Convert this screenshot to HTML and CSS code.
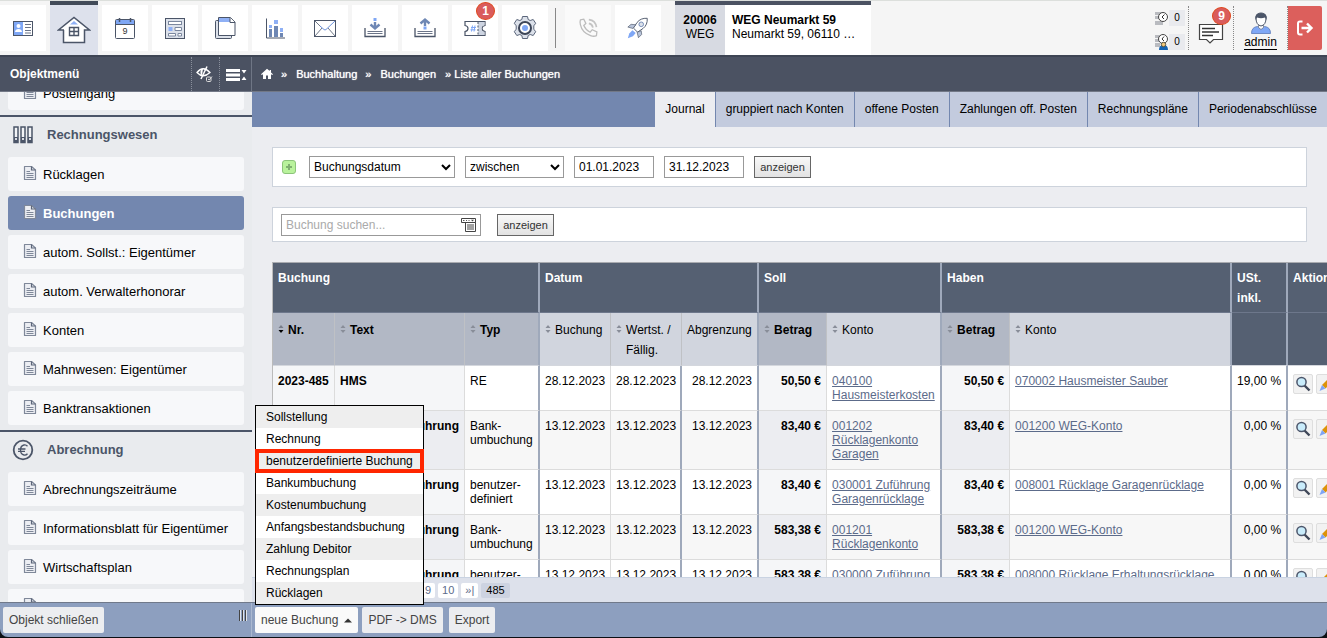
FILE: index.html
```html
<!DOCTYPE html>
<html lang="de">
<head>
<meta charset="utf-8">
<title>Liste aller Buchungen</title>
<link rel="stylesheet" href="styles.css">
</head>
<body>
<svg class="defs" aria-hidden="true">
  <symbol id="doc" viewBox="0 0 14 16">
    <path d="M1.500 1.500H8.500L12.500 5V14.500H1.500Z" fill="#eceef3" stroke="#7f8899" stroke-width="1.200" stroke-linejoin="round"/>
    <path d="M8.500 1.500V5H12.500" fill="none" stroke="#5c667a" stroke-width="1.200"/>
    <path d="M3.500 6.500H7M3.500 8.500H10.500M3.500 10.500H10.500M3.500 12.500H10.500" stroke="#7f8899" stroke-width="1"/>
  </symbol>
  <symbol id="sort" viewBox="0 0 6 10"><path d="M0.500 4L3 1L5.500 4Z" fill="#888d98"/><path d="M0.500 6L3 9L5.500 6Z" fill="#888d98"/></symbol>
  <symbol id="sort-down" viewBox="0 0 6 10"><path d="M0.500 4L3 1L5.500 4Z" fill="#777c88"/><path d="M0.500 6L3 9L5.500 6Z" fill="#000"/></symbol>
  <symbol id="lens" viewBox="0 0 18 18">
    <path d="M10.500 10.500L15.500 15.500" stroke="#3f4758" stroke-width="2.400"/>
    <circle cx="7.500" cy="7" r="4.600" fill="#c9ecfb" stroke="#4c566b" stroke-width="1.500"/>
  </symbol>
  <symbol id="pencil" viewBox="0 0 18 18">
    <path d="M5 10L12.500 2.500L16 6L8.500 13.500Z" fill="#dd9208"/>
    <path d="M5 10L8.500 13.500L2.500 16Z" fill="#7fa5f5"/>
  </symbol>
</svg>

<header class="topbar">
  <nav class="tiles" aria-label="Hauptnavigation">
    <button class="tile" aria-label="Kontakte"><svg width="24" height="24" viewBox="0 0 24 24"><rect x="2.500" y="5.500" width="19" height="14" fill="#fff" stroke="#4b5568"/><rect x="3" y="6" width="9" height="13" fill="#7fa7f5"/><circle cx="7.500" cy="10" r="2" fill="#fff"/><path d="M4 16c0-4 7-4 7 0z" fill="#fff"/><path d="M14 8.500h6M14 11.500h6M14 14.500h6M14 17h6" stroke="#6b7488"/></svg></button>
    <button class="tile active" aria-label="Objekte"><svg width="34" height="30" viewBox="0 0 34 30"><path d="M7 15H1.500L17 2.500L32.500 15H27.500V27.500H6.500V15Z" fill="#fff" stroke="#4b5568" stroke-width="1.500"/><path d="M13 9.500L17 6L21 9.500Z" fill="#8fb0f5"/><path d="M12.500 12.500h9v8h-9zM17 12.500v8M12.500 16.500h9" fill="none" stroke="#4b5568" stroke-width="1.400"/></svg></button>
    <button class="tile" aria-label="Kalender"><svg width="24" height="24" viewBox="0 0 24 24"><rect x="2.500" y="3.500" width="19" height="19" rx="1" fill="#fff" stroke="#4b5568"/><rect x="3" y="4" width="18" height="4" fill="#7fa7f5"/><path d="M3 8.500h18" stroke="#4b5568"/><path d="M6.500 2v4M17.500 2v4" stroke="#4b5568" stroke-width="1.500"/><text x="12" y="18" text-anchor="middle" class="cal-day">9</text></svg></button>
    <button class="tile" aria-label="Berichte"><svg width="24" height="24" viewBox="0 0 24 24"><rect x="2.500" y="2.500" width="19" height="20" fill="#dce1ea" stroke="#4b5568"/><rect x="5.500" y="5.500" width="13" height="3" fill="#fff" stroke="#7b879e"/><rect x="5.500" y="11" width="4" height="4" fill="#8fb0f5"/><path d="M12 11.500h6.500v3H12zM5.500 17.500h7v2.500h-7zM15 17.500h3.500v2.500H15z" fill="#fff" stroke="#7b879e"/></svg></button>
    <button class="tile" aria-label="Dokumente"><svg width="24" height="24" viewBox="0 0 24 24"><rect x="2.500" y="4.500" width="16" height="18" rx="1" fill="#dce1ea" stroke="#4b5568"/><path d="M5.500 1.500h12l4.500 4.500v13.500H5.500z" fill="#fff" stroke="#4b5568"/><path d="M6 2h10.500l1.500 4H6z" fill="#8fb0f5"/><path d="M17 1.500V6.500h5" fill="#fff" stroke="#4b5568"/></svg></button>
    <button class="tile" aria-label="Auswertungen"><svg width="24" height="24" viewBox="0 0 24 24"><path d="M3.500 2.500v19.500H22" fill="none" stroke="#4b5568"/><path d="M6 13h3v8H6zM11 10h4v11h-4zM17 17h3v4h-3z" fill="#6e87b4"/><path d="M6 9h3v3H6zM11 4h4v4h-4zM17 12h3v4h-3z" fill="#8fb0f5"/></svg></button>
    <button class="tile" aria-label="Nachrichten"><svg width="24" height="24" viewBox="0 0 24 24"><rect x="1.500" y="4.500" width="21" height="16" fill="#fff" stroke="#4b5568"/><path d="M2 20l7-8M22 20l-7-8M2 5l6 6" stroke="#4b5568" stroke-width=".8"/><path d="M22 5L13 13.500Q12 14.500 11 13.500L7 10" fill="none" stroke="#6b91dd"/></svg></button>
    <button class="tile" aria-label="Eingang"><svg width="24" height="24" viewBox="0 0 24 24"><path d="M2 12v8.500h20V12" fill="none" stroke="#4b5568" stroke-width="1.300"/><path d="M4.500 15.500h15M4.500 17.500h15" stroke="#6b7488"/><path d="M12 6v6M7.500 8.500L12 12.500l4.500-4" fill="none" stroke="#6e87b4" stroke-width="2.400"/><path d="M10.500 2h3v3h-3z" fill="#7fa7f5"/></svg></button>
    <button class="tile" aria-label="Ausgang"><svg width="24" height="24" viewBox="0 0 24 24"><path d="M2 12v8.500h20V12" fill="none" stroke="#4b5568" stroke-width="1.300"/><path d="M4.500 15.500h15M4.500 17.500h15" stroke="#6b7488"/><path d="M12 4v6M7.500 7.500L12 3.500l4.500 4" fill="none" stroke="#6e87b4" stroke-width="2.400"/><path d="M10.500 10.500h3v3h-3z" fill="#7fa7f5"/></svg></button>
    <button class="tile" aria-label="Tickets"><svg width="24" height="24" viewBox="0 0 24 24"><path d="M2 5.500h20v4q-3 .5-3 3t3 3v4H2v-4q3-.5 3-3t-3-3z" fill="#fff" stroke="#4b5568" stroke-width="1.200"/><path d="M15 6h6.500v3.200q-3 .5-3 3.300t3 3.300V19H15z" fill="#cdd4e1"/><path d="M15 6v13" stroke="#4b5568" stroke-dasharray="2 1.500"/><path d="M9.500 9.500l-1 6M12 9.500l-1 6M8 11.500h5M7.500 13.800h5" stroke="#7fa7f5"/></svg><span class="badge tile-badge">1</span></button>
    <button class="tile" aria-label="Einstellungen"><svg width="26" height="26" viewBox="0 0 26 26"><path d="M10.500 1.500h5l.7 3 2 1 3-1 2.500 3.800-1.900 2.500v3.400l1.900 2.500-2.500 3.800-3-1-2 1-.7 3h-5l-.7-3-2-1-3 1-2.500-3.800 1.900-2.500v-3.400L2.300 8.300l2.500-3.800 3 1 2-1z" fill="#dce1ea" stroke="#5a657a"/><circle cx="13" cy="13" r="6" fill="#fff" stroke="#3d4658" stroke-width="2"/><circle cx="13" cy="13" r="3" fill="#7fa7f5"/></svg></button>
    <span class="tile-rule"></span>
    <button class="tile faint" aria-label="Telefon"><svg width="22" height="22" viewBox="0 0 26 26"><path d="M4 3.500l4-1 2.500 5-2.500 2.500q2.500 5.500 7.500 8l2.500-3 5.500 2.500-.5 4.500q-3 1.500-7 0Q6 18.500 4 9q-.8-3.500 0-5.500z" fill="#fafafa" stroke="#bcbcbc" stroke-width="1.500"/><path d="M14 3q8 1 9 9M14 7.500q4 .8 4.800 5" fill="none" stroke="#c4c4c4" stroke-width="2"/></svg></button>
    <button class="tile" aria-label="Schnellstart"><svg width="24" height="24" viewBox="0 0 26 26"><path d="M23 2.500q-7-.5-11 4.500l-4 6 4.500 4.500 6-4q5-4 4.500-11z" fill="#fff" stroke="#4b5568"/><circle cx="16.500" cy="9" r="2.500" fill="#dce1ea" stroke="#6e87b4"/><path d="M10.500 9.500L5.500 9 2 12l5.500 1.500zM16.500 16l.5 4-3.500 3.500-1.500-6z" fill="#b9c4da" stroke="#4b5568" stroke-width=".7"/><path d="M7 15.500l3.500 3-3 3.500L2 24l1.500-5z" fill="#7fa7f5"/></svg></button>
  </nav>
  <div class="object">
    <div class="object-id"><strong>20006</strong><span>WEG</span></div>
    <div class="object-name"><strong>WEG Neumarkt 59</strong><span>Neumarkt 59, 06110 …</span></div>
  </div>
  <div class="user">
    <div class="counters">
      <div class="counter"><svg width="14" height="16" viewBox="0 0 14 16"><path d="M0 2h7v3H0zM0 6h6v3H0zM0 11h8v4H0z" fill="#b9bbc0"/><circle cx="8" cy="7" r="4.500" fill="#fff" stroke="#444"/><path d="M9.500 4.500L7 7l2 2" fill="none" stroke="#333"/></svg><span>0</span></div>
      <div class="counter"><svg width="14" height="16" viewBox="0 0 14 16"><path d="M0 1h7v3H0zM0 5h6v3H0zM0 9h5v4H0z" fill="#b9bbc0"/><circle cx="8" cy="5" r="4.500" fill="#fff" stroke="#444"/><path d="M9 2.500L7 5l2 2" fill="none" stroke="#333"/><path d="M4 16q0-5 4.500-5t4.500 5z" fill="#1464b4"/><circle cx="8.500" cy="10.500" r="2.200" fill="#f5c97a" stroke="#554"/></svg><span>0</span></div>
    </div>
    <button class="messages" aria-label="Mitteilungen"><svg width="26" height="24" viewBox="0 0 26 24"><path d="M1.500 3.500h23v15h-9L12 22l-3.500-3.500h-7z" fill="#fff" stroke="#444" stroke-width="1.200"/><path d="M4 7.500h13M4 11h17M4 14.500h11" stroke="#333" stroke-width="1.300"/></svg><span class="badge message-badge">9</span></button>
    <a class="admin" href="#"><svg width="22" height="22" viewBox="0 0 22 22"><path d="M1.500 21.500q0-6.500 6-7l3.500 2 3.500-2q6 .5 6 7z" fill="#7fa7f5" stroke="#5b78b8" stroke-width=".8"/><path d="M8.500 12v3.500l2.500 2 2.500-2V12" fill="#fff" stroke="#6b7387" stroke-width=".8"/><path d="M6 6q0-5 5-5t5 5q0 7-5 8Q6 13 6 6z" fill="#fff" stroke="#4b5568"/><path d="M5.500 8Q4 1 11 1t5.500 7L15 5.500Q11 7 7 5.500z" fill="#4b5568"/></svg><span>admin</span></a>
    <button class="logout" aria-label="Abmelden"><svg width="18" height="18" viewBox="0 0 18 18"><path d="M6.500 2.500H4Q2 2.500 2 4.500v9q0 2 2 2h2.500" fill="none" stroke="#fff" stroke-width="2"/><path d="M5.500 9h10M11 4.500L15.500 9 11 13.500" fill="none" stroke="#fff" stroke-width="2.400"/></svg></button>
  </div>
</header>

<div class="titlebar">
  <div class="menu-title">
    <h2>Objektmenü</h2>
    <button aria-label="Ausblenden"><svg width="18" height="18" viewBox="0 0 18 18"><path d="M1 7.500Q7 0 14 7.500Q7 14 1 7.500z" fill="none" stroke="#fff" stroke-width="1.300"/><path d="M7 3.500a4 4 0 0 0-1 7z" fill="#fff"/><path d="M11 1.500L5 14" stroke="#fff" stroke-width="1.500"/><rect x="10.500" y="12" width="4.500" height="4.500" rx="1" fill="#4b5262" stroke="#ddd"/><path d="M12 14l1.200 1 2.800-3.500" fill="none" stroke="#ddd"/></svg></button>
    <button aria-label="Einklappen"><svg width="22" height="14" viewBox="0 0 22 14"><path d="M0 2h14v3H0zM0 6.500h14v3H0zM0 11h14v3H0zM15.500 3h5L18 6.500zM15.500 13h5L18 9.500z" fill="#fff"/></svg></button>
  </div>
  <nav class="crumbs" aria-label="Pfad">
    <a href="#" aria-label="Start"><svg width="12" height="12" viewBox="0 0 12 12"><path d="M6 .8L0 6.300l.8.8L2 6.200V11h3V7.500h2V11h3V6.200l1.200.9.8-.8-2-1.900V2H8.700v1.100z" fill="#fff"/></svg></a>
    <span>»</span><a href="#">Buchhaltung</a><span>»</span><a href="#">Buchungen</a><span class="crumb-last">» Liste aller Buchungen</span>
  </nav>
</div>

<div class="middle">
  <aside class="sidebar">
    <div class="sidebar-scroll">
      <ul class="menu">
        <li><a href="#"><svg><use href="#doc"/></svg>Posteingang</a></li>
      </ul>
      <h3><svg width="22" height="18" viewBox="0 0 22 18"><path d="M2 1h4v15.500H2zM9 1h4v15.500H9zM16 1h4v15.500h-4z" fill="#f3f4f7" stroke="#4b5568" stroke-width="1.500"/><path d="M2 11h4v5H2zM9 11h4v5H9zM16 11h4v5h-4z" fill="#4b5568"/><path d="M3 12h2v2H3zM10 12h2v2h-2zM17 12h2v2h-2z" fill="#d8dbe2"/></svg>Rechnungswesen</h3>
      <ul class="menu">
        <li><a href="#"><svg><use href="#doc"/></svg>Rücklagen</a></li>
        <li><a href="#" class="current"><svg><use href="#doc"/></svg>Buchungen</a></li>
        <li><a href="#"><svg><use href="#doc"/></svg>autom. Sollst.: Eigentümer</a></li>
        <li><a href="#"><svg><use href="#doc"/></svg>autom. Verwalterhonorar</a></li>
        <li><a href="#"><svg><use href="#doc"/></svg>Konten</a></li>
        <li><a href="#"><svg><use href="#doc"/></svg>Mahnwesen: Eigentümer</a></li>
        <li><a href="#"><svg><use href="#doc"/></svg>Banktransaktionen</a></li>
      </ul>
      <h3><svg width="22" height="22" viewBox="0 0 22 22"><circle cx="11" cy="11" r="9.300" fill="none" stroke="#4b5568" stroke-width="1.800"/><path d="M15.500 7.200q-1.500-1.700-3.500-1.200-3.500.8-3.500 5t3.500 5q2 .5 3.500-1.200M6 10h7.500M6 12.300h7" fill="none" stroke="#4b5568" stroke-width="1.300"/></svg>Abrechnung</h3>
      <ul class="menu">
        <li><a href="#"><svg><use href="#doc"/></svg>Abrechnungszeiträume</a></li>
        <li><a href="#"><svg><use href="#doc"/></svg>Informationsblatt für Eigentümer</a></li>
        <li><a href="#"><svg><use href="#doc"/></svg>Wirtschaftsplan</a></li>
        <li><a href="#"><svg><use href="#doc"/></svg>Sonderumlage</a></li>
      </ul>
    </div>
  </aside>

  <main class="content">
    <nav class="tabs" aria-label="Ansichten">
      <a href="#" class="selected">Journal</a><a href="#">gruppiert nach Konten</a><a href="#">offene Posten</a><a href="#">Zahlungen off. Posten</a><a href="#">Rechnungspläne</a><a href="#">Periodenabschlüsse</a>
    </nav>
    <div class="scroll">
      <form class="panel filter">
        <button type="button" class="add" aria-label="Filter hinzufügen"><svg width="14" height="14" viewBox="0 0 14 14"><rect x=".5" y=".5" width="13" height="13" rx="2.500" fill="#b9f29c" stroke="#8cc47a"/><path d="M7 4v6M4 7h6" stroke="#7fb070" stroke-width="2"/></svg></button>
        <select class="field-date" aria-label="Feld"><option>Buchungsdatum</option></select>
        <select class="field-op" aria-label="Operator"><option>zwischen</option></select>
        <input type="text" value="01.01.2023" aria-label="Von">
        <input type="text" value="31.12.2023" aria-label="Bis">
        <button type="button" class="show">anzeigen</button>
      </form>
      <form class="panel search">
        <div class="search-box">
          <input type="text" placeholder="Buchung suchen..." aria-label="Buchung suchen">
          <svg width="16" height="16" viewBox="0 0 16 16"><path d="M.5 1.500h14v4H.5zM4.500 5.500h10v9h-10z" fill="#fff" stroke="#444"/><path d="M6 8h7M6 10h7M6 12h7" stroke="#444"/><path d="M2 3.500h1.500M5 3.500h1M7.500 3.500h1" stroke="#555"/><path d="M10 2.800h3L11.500 4.500z" fill="#444"/></svg>
        </div>
        <button type="button" class="show">anzeigen</button>
      </form>

      <table class="journal">
        <colgroup><col class="c-nr"><col class="c-text"><col class="c-typ"><col class="c-date"><col class="c-date"><col class="c-abgr"><col class="c-amount"><col class="c-konto"><col class="c-amount"><col class="c-konto2"><col class="c-ust"><col class="c-act"></colgroup>
        <thead>
          <tr class="groups"><th colspan="3" class="thick">Buchung</th><th colspan="3" class="thick">Datum</th><th colspan="2" class="thick">Soll</th><th colspan="2" class="thick">Haben</th><th class="thick">USt. inkl.</th><th>Aktionen</th></tr>
          <tr class="columns">
            <th class="key"><div><svg><use href="#sort-down"/></svg>Nr.</div></th>
            <th class="key"><div><svg><use href="#sort"/></svg>Text</div></th>
            <th class="key thick"><div><svg><use href="#sort"/></svg>Typ</div></th>
            <th><div><svg><use href="#sort"/></svg>Buchung</div></th>
            <th><div><svg><use href="#sort"/></svg>Wertst. / Fällig.</div></th>
            <th class="thick">Abgrenzung</th>
            <th class="key"><div><svg><use href="#sort"/></svg>Betrag</div></th>
            <th class="thick"><div><svg><use href="#sort"/></svg>Konto</div></th>
            <th class="key"><div><svg><use href="#sort"/></svg>Betrag</div></th>
            <th class="thick"><div><svg><use href="#sort"/></svg>Konto</div></th>
            <th class="dark thick"></th><th class="dark"></th>
          </tr>
        </thead>
        <tbody>
          <tr><td class="strong">2023-485</td><td class="strong">HMS</td><td class="thick">RE</td><td>28.12.2023</td><td class="thick">28.12.2023</td><td class="num thick">28.12.2023</td><td class="strong num">50,50 €</td><td class="thick"><a href="#">040100 Hausmeisterkosten</a></td><td class="strong num">50,50 €</td><td class="thick"><a href="#">070002 Hausmeister Sauber</a></td><td class="num thick">19,00 %</td><td class="actions"><div><button aria-label="Ansehen"><svg><use href="#lens"/></svg></button><button aria-label="Bearbeiten"><svg><use href="#pencil"/></svg></button></div></td></tr>
          <tr><td class="strong">2023-484</td><td class="strong num">Rücklagenzuführung</td><td class="thick">Bank-<br>umbuchung</td><td>13.12.2023</td><td class="thick">13.12.2023</td><td class="num thick">13.12.2023</td><td class="strong num">83,40 €</td><td class="thick"><a href="#">001202 Rücklagenkonto Garagen</a></td><td class="strong num">83,40 €</td><td class="thick"><a href="#">001200 WEG-Konto</a></td><td class="num thick">0,00 %</td><td class="actions"><div><button aria-label="Ansehen"><svg><use href="#lens"/></svg></button><button aria-label="Bearbeiten"><svg><use href="#pencil"/></svg></button></div></td></tr>
          <tr><td class="strong">2023-483</td><td class="strong num">Rücklagenzuführung</td><td class="thick">benutzer-<br>definiert</td><td>13.12.2023</td><td class="thick">13.12.2023</td><td class="num thick">13.12.2023</td><td class="strong num">83,40 €</td><td class="thick"><a href="#">030001 Zuführung Garagenrücklage</a></td><td class="strong num">83,40 €</td><td class="thick"><a href="#">008001 Rücklage Garagenrücklage</a></td><td class="num thick">0,00 %</td><td class="actions"><div><button aria-label="Ansehen"><svg><use href="#lens"/></svg></button><button aria-label="Bearbeiten"><svg><use href="#pencil"/></svg></button></div></td></tr>
          <tr><td class="strong">2023-482</td><td class="strong num">Rücklagenzuführung</td><td class="thick">Bank-<br>umbuchung</td><td>13.12.2023</td><td class="thick">13.12.2023</td><td class="num thick">13.12.2023</td><td class="strong num">583,38 €</td><td class="thick"><a href="#">001201 Rücklagenkonto</a></td><td class="strong num">583,38 €</td><td class="thick"><a href="#">001200 WEG-Konto</a></td><td class="num thick">0,00 %</td><td class="actions"><div><button aria-label="Ansehen"><svg><use href="#lens"/></svg></button><button aria-label="Bearbeiten"><svg><use href="#pencil"/></svg></button></div></td></tr>
          <tr><td class="strong">2023-481</td><td class="strong num">Rücklagenzuführung</td><td class="thick">benutzer-<br>definiert</td><td>13.12.2023</td><td class="thick">13.12.2023</td><td class="num thick">13.12.2023</td><td class="strong num">583,38 €</td><td class="thick"><a href="#">030000 Zuführung Rücklage</a></td><td class="strong num">583,38 €</td><td class="thick"><a href="#">008000 Rücklage Erhaltungsrücklage</a></td><td class="num thick">0,00 %</td><td class="actions"><div><button aria-label="Ansehen"><svg><use href="#lens"/></svg></button><button aria-label="Bearbeiten"><svg><use href="#pencil"/></svg></button></div></td></tr>
        </tbody>
      </table>
    </div>
    <nav class="pager" aria-label="Seiten">
      <a href="#">|«</a><a href="#">1</a><a href="#">2</a><a href="#">3</a><a href="#">4</a><a href="#">5</a><a href="#">6</a><a href="#">7</a><a href="#">8</a><a href="#">9</a><a href="#">10</a><a href="#">»|</a><span>485</span>
    </nav>
  </main>
</div>

<footer class="footer">
  <div class="footer-left"><button>Objekt schließen</button><span class="grip"></span></div>
  <div class="footer-main">
    <div class="dropdown">
      <button class="open">neue Buchung <svg width="8" height="5" viewBox="0 0 8 5"><path d="M0 4.500L4 .5L8 4.500Z" fill="#333"/></svg></button>
      <ul class="popup">
        <li><a href="#">Sollstellung</a></li>
        <li><a href="#">Rechnung</a></li>
        <li class="marked"><a href="#">benutzerdefinierte Buchung</a></li>
        <li><a href="#">Bankumbuchung</a></li>
        <li><a href="#">Kostenumbuchung</a></li>
        <li><a href="#">Anfangsbestandsbuchung</a></li>
        <li><a href="#">Zahlung Debitor</a></li>
        <li><a href="#">Rechnungsplan</a></li>
        <li><a href="#">Rücklagen</a></li>
      </ul>
    </div>
    <button>PDF -&gt; DMS</button>
    <button class="export">Export</button>
  </div>
</footer>
</body>
</html>
```

FILE: styles.css
```css
* { box-sizing: border-box; }
html, body { height: 100%; }
body {
  margin: 0;
  padding-bottom: 1px;
  display: flex;
  flex-direction: column;
  overflow: hidden;
  background: #0c0f14;
  color: #000;
  font: 12px/14px "Liberation Sans", Arial, sans-serif;
}
button, input, select { font: inherit; color: inherit; margin: 0; }
button { border: 0; padding: 0; background: none; }
a { color: inherit; text-decoration: none; }
ul { list-style: none; margin: 0; padding: 0; }
h2, h3 { margin: 0; }
svg { display: block; flex: none; }
.defs { position: absolute; width: 0; height: 0; }

/* Top bar */
.topbar {
  flex: none;
  display: flex;
  height: 55px;
  border-top: 1px solid #dcdfdc;
  background: #f5f5f5;
}
.tiles { display: flex; align-items: center; gap: 4px; }
.tile {
  position: relative;
  display: flex;
  align-items: center;
  justify-content: center;
  width: 46px;
  height: 46px;
  background: #fff;
}
.tile.active { width: 48px; height: 54px; border-top: 4px solid #414a58; background: #dde1ec; }
.tile.faint { background: #fafafa; }
.tile-rule { width: 1px; height: 40px; margin: 0 5px 0 3px; background: #888; }
.cal-day { font-size: 9px; fill: #333; }
.badge {
  position: absolute;
  width: 19px;
  height: 18px;
  border: 1px solid #e0481c;
  border-radius: 50%;
  background: #d95c5c;
  color: #fff;
  font-weight: bold;
  line-height: 16px;
  text-align: center;
}
.tile-badge { top: -3px; right: 3px; }
.object {
  display: flex;
  margin-left: 14px;
  width: 196px;
  border-top: 4px solid #4b5262;
  background: #fff;
}
.object-id, .object-name { display: flex; flex-direction: column; padding-top: 8px; }
.object-id { width: 50px; align-items: center; background: #d7dae2; }
.object-name { padding-left: 7px; }
.user { display: flex; align-items: center; margin-left: auto; padding-right: 5px; }
.user > * { height: 44px; }
.counters { display: flex; flex-direction: column; justify-content: space-between; padding: 4px 3px 0 0; }
.counter { display: flex; align-items: center; font-size: 10px; }
.counter span { width: 16px; height: 16px; background: #e9eaee; line-height: 16px; text-align: center; }
.counters, .messages, .admin { border-right: 1px dotted #888; }
.messages { position: relative; width: 45px; padding: 10px 0 0 9px; }
.message-badge { top: 1px; right: 2px; }
.admin { display: flex; flex-direction: column; align-items: center; width: 54px; padding-top: 6px; }
.admin span { padding-top: 2px; border-bottom: 1px solid #000; line-height: 13px; }
.logout { display: flex; align-items: center; justify-content: center; width: 34px; border-radius: 0 2px 2px 0; background: #dc5f5c; }

/* Title bar */
.titlebar {
  flex: none;
  display: flex;
  height: 37px;
  border-top: 2px solid #3e4554;
  border-bottom: 1px solid #727886;
  background: #4b5262;
  color: #fff;
}
.menu-title { display: flex; align-items: center; width: 252px; border-right: 1px solid #6f7685; }
.menu-title h2 { flex: 1; padding-left: 10px; font-size: 12px; }
.menu-title button { display: flex; align-items: center; height: 100%; border-left: 1px dotted #8a909c; padding-left: 4px; width: 28px; }
.menu-title button + button { width: 32px; padding-left: 6px; }
.crumbs { display: flex; align-items: center; gap: 9px; padding-left: 9px; font-size: 11px; text-shadow: 0 0 1px #fff; }
.crumbs a + span { margin-left: -1px; }
.crumbs .crumb-last { margin-left: 0; }

.middle { flex: 1; display: flex; min-height: 0; }

/* Sidebar */
.sidebar { flex: none; width: 252px; overflow: hidden; background: #e9ebee; }
.sidebar-scroll { margin-top: -16px; }
.sidebar h3 {
  display: flex;
  align-items: center;
  gap: 13px;
  height: 42px;
  margin-top: 5px;
  padding: 0 0 4px 12px;
  border-top: 2px solid #4b5568;
  color: #4b5568;
  font-size: 13px;
}
.menu { display: flex; flex-direction: column; gap: 5px; padding: 0 8px; }
.menu a { display: flex; align-items: center; gap: 6px; height: 34px; padding: 2px 0 0 15px; border-radius: 3px; background: #f7f8fa; font-size: 13px; }
.menu svg { width: 14px; height: 16px; margin-bottom: 4px; }
.menu a.current { background: #7387af; color: #fff; font-weight: bold; }

/* Content */
.content { flex: 1; min-width: 0; display: flex; flex-direction: column; background: #ecedf1; }
.tabs { flex: none; display: flex; justify-content: flex-end; height: 35px; background: #7387af; }
.tabs a { padding: 10px 10px 0; background: #c3cbde; white-space: nowrap; }
.tabs a + a { border-left: 1px solid #7387af; }
.tabs a.selected { background: #ecedf1; }
.scroll { flex: 1; min-height: 0; overflow: hidden; padding: 20px 20px 0; }
.panel { display: flex; border: 1px solid #cdd3dc; background: #fff; margin-bottom: 20px; }
.filter { align-items: center; gap: 10px; height: 40px; padding-left: 9px; }
.add { margin-right: 3px; }
.panel input, .panel select { height: 22px; border: 1px solid #999; border-radius: 0; background: #fff; padding: 0 4px; }
.panel select { padding: 0; }
.panel input { width: 80px; }
.field-date { width: 146px; }
.field-op { width: 99px; }
.show { width: 57px; height: 22px; border: 1px solid #666; background: linear-gradient(#f8f8f8, #e2e2e2); color: #333; font-size: 11px; }
.search { align-items: center; gap: 16px; height: 35px; padding-left: 8px; }
.search-box { position: relative; display: flex; }
.panel .search-box input { width: 200px; }
.search-box input::placeholder { color: #aaa; }
.search-box svg { position: absolute; right: 4px; top: 3px; }

/* Journal */
.journal { table-layout: fixed; width: 1136px; border-collapse: separate; border-spacing: 0; border-left: 1px solid #bbb; border-top: 1px solid #a9abb0; }
.c-nr { width: 62px; }
.c-text { width: 130px; }
.c-typ { width: 75px; }
.c-date { width: 71px; }
.c-abgr { width: 77px; }
.c-amount { width: 68px; }
.c-konto { width: 115px; }
.c-konto2 { width: 222px; }
.c-ust { width: 56px; }
.c-act { width: 120px; }
.journal th, .journal td { vertical-align: top; text-align: left; border-right: 1px solid #dcdcdc; }
.journal .thick { border-right: 2px solid #9fa9bb; }
.groups th { padding: 5px 5px 4px; border-bottom: 1px solid #6d778b; background: #556072; color: #fff; line-height: 20px; }
.columns th { height: 53px; padding: 7px 4px 5px 5px; border-bottom: 1px solid #d4d7dd; border-right-color: #bfc1c5; background: #d1d5de; font-weight: normal; line-height: 20px; }
.columns th.key { background: #b2b8c5; font-weight: bold; }
.columns th.dark { background: #556072; }
.columns div { display: flex; gap: 4px; }
.columns svg { width: 6px; height: 10px; margin-top: 4px; }
.journal td { padding: 8px 5px; border-bottom: 1px solid #dcdcdc; background: #fff; }
.journal td a { color: #5c6b8a; text-decoration: underline; }
.journal td.strong { background: #f5f6f8; font-weight: bold; }
.journal tr:nth-child(even) td { background: #f7f7f7; }
.journal tr:nth-child(even) td.strong { background: #ecedf1; }
.journal td.num { text-align: right; padding-left: 0; }
.journal td.actions { padding-bottom: 0; }
.actions div { display: flex; gap: 3px; }
.actions button { width: 20px; height: 20px; border: 1px solid #dedede; border-radius: 2px; background: #f2f2f2; }
.actions svg { width: 18px; height: 18px; }

/* Pager */
.pager { flex: none; display: flex; align-items: center; gap: 3px; height: 25px; padding-left: 12px; border-top: 1px solid #c9d3e2; background: #dde1eb; font-size: 11px; }
.pager a, .pager span { height: 15px; padding: 0 4px; border-radius: 2px; background: #fff; color: #5c6b8a; line-height: 15px; }
.pager span { padding: 0 5px; background: #cdd3e1; color: #000; }

/* Footer */
.footer { flex: none; display: flex; height: 35px; border-top: 1px solid #70798a; border-radius: 0 0 8px 8px; background: #8d9fbf; }
.footer-left { display: flex; justify-content: space-between; width: 252px; padding: 4px 4px 0 3px; border-right: 1px solid #aab8d0; }
.footer button { height: 26px; padding: 0 6px; border-radius: 2px; background: #ecedf0; color: #444; white-space: nowrap; }
.grip { width: 8px; height: 11px; margin-top: 3px; background: repeating-linear-gradient(90deg, #444 0 1px, #dfe4ec 1px 2px, #8d9fbf 2px 3px); }
.footer-main { display: flex; gap: 4px; padding: 4px 3px 0; }
.footer .open { display: flex; align-items: center; gap: 6px; background: #fafafa; }
.footer .export { margin-left: 2px; }
.dropdown { position: relative; height: 26px; }
.popup { position: absolute; left: 0; bottom: 28px; width: 169px; border: 1px solid #000; background: #fff; }
.popup a { display: block; padding: 0 10px; line-height: 22px; white-space: nowrap; }
.popup li:nth-child(odd) { background: #eee; }
.popup .marked { outline: 4px solid #ff2600; outline-offset: -3px; }
```
